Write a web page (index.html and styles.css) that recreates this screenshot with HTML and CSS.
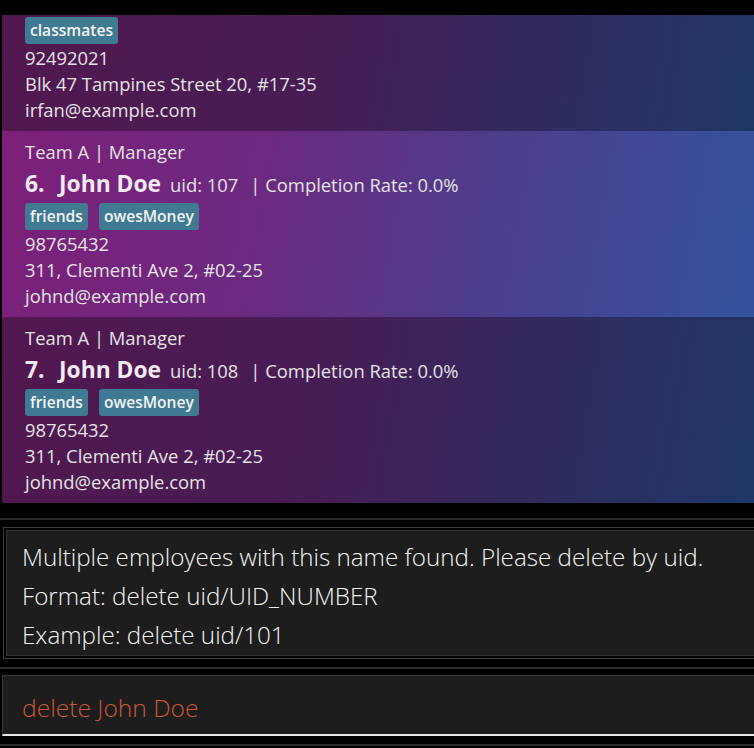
FILE: index.html
```html
<!DOCTYPE html>
<html lang="en">
<head>
<meta charset="utf-8">
<title>Employee list</title>
<link rel="stylesheet" href="styles.css">
</head>
<body>
<div class="app">
  <div class="list">
    <div class="card card-cut">
      <div class="tags"><span class="tag">classmates</span></div>
      <div class="line">92492021</div>
      <div class="line">Blk 47 Tampines Street 20, #17-35</div>
      <div class="line">irfan@example.com</div>
    </div>
    <div class="card card-selected">
      <div class="line">Team A | Manager</div>
      <div class="name-row">
        <span class="idx">6.</span>
        <span class="name">John Doe</span>
        <span class="uid">uid: 107</span>
        <span class="rate">| Completion Rate: 0.0%</span>
      </div>
      <div class="tags"><span class="tag">friends</span><span class="tag">owesMoney</span></div>
      <div class="line">98765432</div>
      <div class="line">311, Clementi Ave 2, #02-25</div>
      <div class="line">johnd@example.com</div>
    </div>
    <div class="card">
      <div class="line">Team A | Manager</div>
      <div class="name-row">
        <span class="idx">7.</span>
        <span class="name">John Doe</span>
        <span class="uid">uid: 108</span>
        <span class="rate">| Completion Rate: 0.0%</span>
      </div>
      <div class="tags"><span class="tag">friends</span><span class="tag">owesMoney</span></div>
      <div class="line">98765432</div>
      <div class="line">311, Clementi Ave 2, #02-25</div>
      <div class="line">johnd@example.com</div>
    </div>
  </div>

  <div class="pane">
    <div class="result-outer">
      <div class="result-inner">
        <div class="result-line">Multiple employees with this name found. Please delete by uid.</div>
        <div class="result-line">Format: delete uid/UID_NUMBER</div>
        <div class="result-line">Example: delete uid/101</div>
      </div>
    </div>
  </div>

  <div class="pane pane-cmd">
    <div class="command">delete John Doe</div>
  </div>
  <div class="pane pane-last"></div>
</div>
</body>
</html>
```

FILE: styles.css
```css
html, body {
  margin: 0;
  padding: 0;
  background: #000;
  overflow: hidden;
}

.app {
  width: 754px;
  height: 748px;
  overflow: hidden;
  font-family: "Open Sans", "Noto Sans", sans-serif;
}

.list {
  padding-top: 15px;
  padding-left: 2px;
}

.card {
  padding: 8px 0 8px 23px;
  background: linear-gradient(100deg, #52174f 0%, #481c55 40%, #322a5e 70%, #1f3766 100%);
  color: #e4e4e4;
  font-size: 18.4px;
}

.card-cut {
  padding-top: 2px;
}

.card-selected {
  background: linear-gradient(100deg, #7d1f79 0%, #6b2a80 35%, #4c3e8d 65%, #34539d 100%);
}

.line {
  height: 26px;
  line-height: 26px;
  white-space: nowrap;
}

.name-row {
  height: 38px;
  display: flex;
  align-items: baseline;
  white-space: nowrap;
  line-height: 38px;
}

.idx {
  font-weight: 700;
  font-size: 22.8px;
  color: #f2eaf2;
  width: 34px;
}

.name {
  font-weight: 700;
  font-size: 22.8px;
  color: #f2eaf2;
  margin-right: 9px;
}

.uid {
  margin-right: 12px;
}

.tags {
  height: 28px;
  display: flex;
  gap: 11px;
}

.tag {
  height: 27px;
  line-height: 27px;
  padding: 0 5px;
  background: #3f7a92;
  border-radius: 3px;
  color: #f4f4f4;
  font-weight: 600;
  font-size: 15.6px;
}

.pane {
  margin-top: 15px;
  border-top: 2px solid #2b2b2b;
  padding-top: 7px;
}

.result-outer {
  margin-left: 3px;
  margin-right: -20px;
  border: 1px solid #3a3a3a;
  padding: 2px;
  height: 126px;
}

.result-inner {
  border: 1px solid #333;
  background: #1d1d1d;
  height: 118px;
  padding: 6px 0 0 15px;
  color: #f4f4f4;
  font-weight: 300;
  font-size: 24.2px;
}

.result-line {
  height: 39px;
  line-height: 39px;
  white-space: nowrap;
}

.pane-cmd {
  margin-top: 8px;
  padding-top: 6px;
}

.command {
  margin-left: 2px;
  margin-right: -20px;
  border-top: 1px solid #3a3a3a;
  border-left: 1px solid #3a3a3a;
  border-bottom: 2px solid #e6e6e6;
  background: #1d1d1d;
  height: 41px;
  padding: 17px 0 0 19px;
  line-height: 30px;
  color: #cf5535;
  font-weight: 300;
  font-size: 24.6px;
}

.pane-last {
  margin-top: 8px;
}
```
